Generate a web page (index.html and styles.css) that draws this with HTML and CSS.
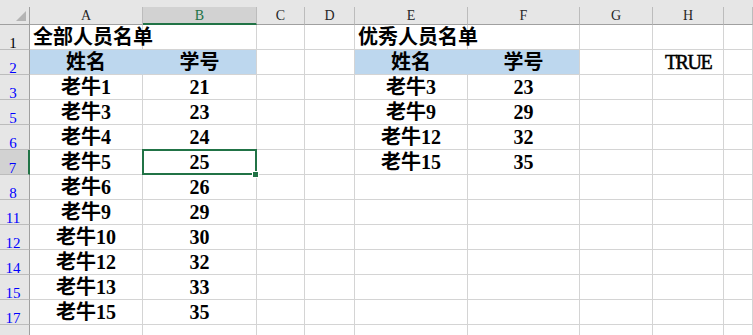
FILE: index.html
```html
<!DOCTYPE html>
<html lang="zh-CN">
<head>
  <meta charset="UTF-8">
  <meta name="viewport" content="width=device-width, initial-scale=1.0">
  <title>人员名单</title>
  <link rel="stylesheet" href="styles.css">
</head>
<body>
  <div class="sheet">
    <div class="top-strip"></div>
    <div class="grid" id="grid"></div>
  </div>
  <script>
    const columns = ['A', 'B', 'C', 'D', 'E', 'F', 'G', 'H', 'I'];
    const rows = [
      { n: 1, cells: { A: '全部人员名单', E: '优秀人员名单' } },
      { n: 2, cells: { A: '姓名', B: '学号', E: '姓名', F: '学号', H: 'TRUE' } },
      { n: 3, cells: { A: '老牛1', B: '21', E: '老牛3', F: '23' } },
      { n: 5, cells: { A: '老牛3', B: '23', E: '老牛9', F: '29' } },
      { n: 6, cells: { A: '老牛4', B: '24', E: '老牛12', F: '32' } },
      { n: 7, cells: { A: '老牛5', B: '25', E: '老牛15', F: '35' } },
      { n: 8, cells: { A: '老牛6', B: '26' } },
      { n: 11, cells: { A: '老牛9', B: '29' } },
      { n: 12, cells: { A: '老牛10', B: '30' } },
      { n: 14, cells: { A: '老牛12', B: '32' } },
      { n: 15, cells: { A: '老牛13', B: '33' } },
      { n: 17, cells: { A: '老牛15', B: '35' } },
      { n: '', cells: {} }
    ];
    const grid = document.getElementById('grid');

    function add(className, text) {
      const el = document.createElement('div');
      el.className = className;
      el.textContent = text || '';
      grid.appendChild(el);
    }

    add('corner');
    columns.forEach(c => add(`col-head ${c === 'B' ? 'active' : ''}`, c === 'I' ? '' : c));

    rows.forEach(row => {
      let headClass = 'row-head';
      if (row.n === 1) headClass += ' plain';
      if (row.n === 7) headClass += ' active';
      add(headClass, row.n);

      columns.forEach(c => {
        let cls = 'cell';
        const value = row.cells[c];
        if (row.n === 1) cls += ' title';
        if (row.n === 2 && ['A', 'B', 'E', 'F'].includes(c)) cls += ' head';
        if (row.n === 2 && (c === 'A' || c === 'E')) cls += ' join';
        if (row.n === 7 && c === 'B') cls += ' selected';
        if (value === 'TRUE') cls += ' bool';
        add(cls, value);
      });
    });
  </script>
</body>
</html>
```

FILE: styles.css
```css
:root {
  --header-bg: #e6e6e6;
  --header-active: #d2d2d2;
  --header-line: #a0a0a0;
  --header-sep: #bcbcbc;
  --grid-line: #d4d4d4;
  --excel-green: #217346;
  --fill-blue: #bdd7ee;
  --row-blue: #0000ff;
}
body {
  margin: 0;
  padding: 0;
  background-color: white;
  overflow: hidden;
}
.top-strip {
  height: 7px;
  background-color: var(--header-bg);
}
.grid {
  display: grid;
  grid-template-columns: 30px 113px 114px 48px 50px 113px 112px 73px 71px 1fr;
  grid-template-rows: 18px repeat(13, 25px);
}
.grid > div {
  box-sizing: border-box;
  white-space: nowrap;
}
.corner {
  position: relative;
  background-color: var(--header-bg);
  border-right: 1px solid var(--header-line);
  border-bottom: 1px solid var(--header-line);
}
.corner::after {
  content: '';
  position: absolute;
  right: 3px;
  bottom: 3px;
  width: 0;
  height: 0;
  border-left: 10px solid transparent;
  border-bottom: 10px solid #b4b4b4;
}
.col-head {
  background-color: var(--header-bg);
  border-right: 1px solid var(--header-sep);
  border-bottom: 1px solid var(--header-line);
  font: 14px/17px "Liberation Serif", serif;
  color: #262626;
  text-align: center;
}
.col-head.active {
  background-color: var(--header-active);
  color: var(--excel-green);
  border-bottom: 2px solid var(--excel-green);
}
.row-head {
  display: flex;
  align-items: flex-end;
  justify-content: center;
  padding-right: 3px;
  background-color: var(--header-bg);
  border-right: 1px solid var(--header-line);
  border-bottom: 1px solid var(--header-sep);
  font: 15px/12px "Liberation Serif", serif;
  color: var(--row-blue);
}
.row-head.plain {
  color: black;
}
.row-head.active {
  background-color: var(--header-active);
  border-right: 2px solid var(--excel-green);
}
.cell {
  border-right: 1px solid var(--grid-line);
  border-bottom: 1px solid var(--grid-line);
  font: bold 20px/24px "Liberation Serif", "Noto Sans CJK SC", serif;
  color: black;
  text-align: center;
}
.cell.title {
  text-align: left;
  padding-left: 3px;
}
.cell.head {
  background-color: var(--fill-blue);
}
.cell.head.join {
  border-right-color: var(--fill-blue);
}
.cell.bool {
  font-weight: normal;
  letter-spacing: -1.5px;
  -webkit-text-stroke: 0.5px black;
}
.cell.selected {
  position: relative;
  z-index: 2;
}
.cell.selected::before {
  content: '';
  position: absolute;
  left: -1px;
  top: -1px;
  right: -1px;
  bottom: -1px;
  border: 2px solid var(--excel-green);
}
.cell.selected::after {
  content: '';
  position: absolute;
  right: -3px;
  bottom: -4px;
  width: 7px;
  height: 7px;
  box-sizing: border-box;
  background-color: var(--excel-green);
  border: 1px solid white;
}
```
